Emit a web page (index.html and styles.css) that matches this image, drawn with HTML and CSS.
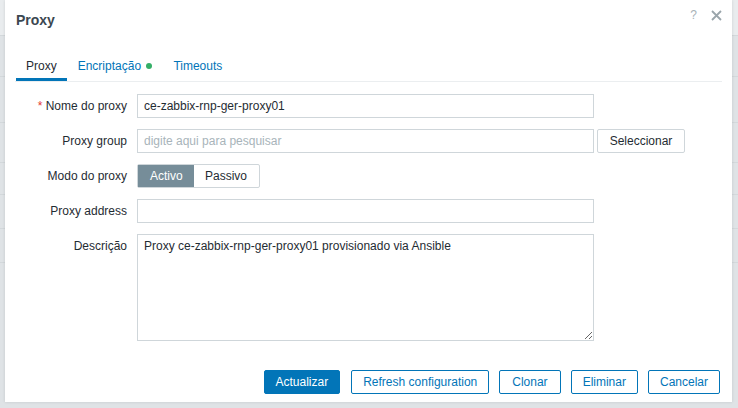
FILE: index.html
```html
<!DOCTYPE html>
<html>
<head>
<meta charset="utf-8">
<link rel="stylesheet" href="styles.css">
</head>
<body>
<div class="page">
  <div class="dialog">
    <div class="dlg-head">
      <h4 class="dlg-title">Proxy</h4>
      <div class="dlg-tools">
        <span class="help">?</span>
        <svg class="close" width="11" height="11" viewBox="0 0 11 11"><path d="M1 1 L10 10 M10 1 L1 10" stroke="#9aa5ab" stroke-width="1.8" fill="none"/></svg>
      </div>
    </div>
    <div class="tabs">
      <span class="tab active">Proxy</span>
      <span class="tab tab-dot">Encriptação <span class="dot"></span></span>
      <span class="tab">Timeouts</span>
    </div>
    <div class="form">
      <label class="lbl"><span class="req">*</span> Nome do proxy</label>
      <div class="ctl"><input class="inp" type="text" value="ce-zabbix-rnp-ger-proxy01"></div>

      <label class="lbl">Proxy group</label>
      <div class="ctl row"><input class="inp" type="text" placeholder="digite aqui para pesquisar"><button class="btn-grey">Seleccionar</button></div>

      <label class="lbl">Modo do proxy</label>
      <div class="ctl"><div class="radio"><span class="seg on">Activo</span><span class="seg">Passivo</span></div></div>

      <label class="lbl">Proxy address</label>
      <div class="ctl"><input class="inp" type="text" value=""></div>

      <label class="lbl">Descrição</label>
      <div class="ctl"><textarea class="txt">Proxy ce-zabbix-rnp-ger-proxy01 provisionado via Ansible</textarea></div>
    </div>
    <div class="footer">
      <button class="btn primary">Actualizar</button>
      <button class="btn alt">Refresh configuration</button>
      <button class="btn alt wide">Clonar</button>
      <button class="btn alt">Eliminar</button>
      <button class="btn alt">Cancelar</button>
    </div>
  </div>
</div>
</body>
</html>
```
FILE: styles.css
```css
html, body {
  margin: 0;
  padding: 0;
}
body {
  width: 738px;
  height: 408px;
  overflow: hidden;
  font-family: "Liberation Sans", Arial, sans-serif;
  font-size: 12px;
  color: #1f2c33;
  background: #dfe3e6;
}
.page {
  width: 738px;
  height: 408px;
  background:
    linear-gradient(#e9ecee, #e9ecee) 0 0 / 100% 35px no-repeat,
    linear-gradient(#d3d8db, #d3d8db) 0 35px / 100% 1px no-repeat,
    linear-gradient(#d3d8db, #d3d8db) 0 76px / 100% 1px no-repeat,
    linear-gradient(#d3d8db, #d3d8db) 0 122px / 100% 1px no-repeat,
    linear-gradient(#d3d8db, #d3d8db) 0 162px / 100% 1px no-repeat,
    linear-gradient(#d3d8db, #d3d8db) 0 194px / 100% 1px no-repeat,
    linear-gradient(#d3d8db, #d3d8db) 0 228px / 100% 1px no-repeat,
    linear-gradient(#d3d8db, #d3d8db) 0 262px / 100% 1px no-repeat,
    #dfe3e6;
}
.dialog {
  margin-left: 5px;
  width: 727px;
  height: 402px;
  background: #fff;
  box-shadow: 0 0 3px rgba(0,0,0,0.12);
  display: flex;
  flex-direction: column;
  box-sizing: border-box;
}
.dlg-head {
  display: flex;
  justify-content: space-between;
  align-items: flex-start;
  height: 52px;
  padding: 0 10px 0 11px;
}
.dlg-title {
  margin: 12px 0 0;
  font-size: 14px;
  font-weight: bold;
  color: #3b4750;
  line-height: 17px;
}
.dlg-tools {
  display: flex;
  align-items: center;
  gap: 14px;
  margin-top: 9px;
}
.help {
  color: #a8b2b8;
  font-size: 12px;
  line-height: 12px;
}
.close { display: block; }
.tabs {
  margin: 0 10px;
  padding-left: 1px;
  display: flex;
  border-bottom: 1px solid #ebeef0;
  height: 30px;
  box-sizing: border-box;
}
.tab {
  padding: 6px 10px 0;
  color: #0275b8;
  line-height: 16px;
  box-sizing: border-box;
}
.tab-dot { padding: 6px 11px 0 11px; }
.tab.active {
  color: #1f2c33;
  border-bottom: 3px solid #0275b8;
}
.dot {
  display: inline-block;
  width: 6px;
  height: 6px;
  border-radius: 50%;
  background: #34af67;
  margin-left: 2px;
  vertical-align: 1px;
}
.form {
  display: grid;
  grid-template-columns: 112px 1fr;
  column-gap: 10px;
  row-gap: 11px;
  padding: 12px 10px 0;
}
.lbl {
  text-align: right;
  line-height: 24px;
  color: #1f2c33;
  white-space: nowrap;
}
.req { color: #e33734; }
.ctl { display: flex; align-items: flex-start; }
.row { gap: 3px; }
.inp {
  width: 457px;
  height: 24px;
  box-sizing: border-box;
  border: 1px solid #cfd6da;
  padding: 0 6px;
  font-family: inherit;
  font-size: 12px;
  color: #1f2c33;
  background: #fff;
  margin: 0;
  outline: none;
}
.inp::placeholder { color: #a8b4ba; }
.btn-grey {
  height: 24px;
  padding: 0 10px;
  box-sizing: border-box;
  border: 1px solid #cfd6da;
  background: #fff;
  border-radius: 2px;
  font-family: inherit;
  font-size: 12px;
  color: #1f2c33;
  width: 88px;
}
.radio {
  display: flex;
  border: 1px solid #cfd6da;
  height: 24px;
  box-sizing: border-box;
  border-radius: 2px;
}
.seg {
  line-height: 22px;
  padding: 0 12px 0 11px;
  color: #1f2c33;
}
.seg.on {
  background: #768d99;
  color: #fff;
  width: 56px;
  box-sizing: border-box;
  padding: 0 12px;
}
.txt {
  width: 457px;
  height: 107px;
  box-sizing: border-box;
  border: 1px solid #cfd6da;
  padding: 4px 6px;
  font-family: inherit;
  font-size: 12px;
  color: #1f2c33;
  resize: both;
  margin: 0;
  outline: none;
}
.footer {
  margin-top: auto;
  display: flex;
  justify-content: flex-end;
  gap: 10px;
  padding: 0 12px 8px;
}
.btn {
  height: 24px;
  box-sizing: border-box;
  padding: 0 11px;
  font-family: inherit;
  font-size: 12px;
  border-radius: 2px;
  margin: 0;
}
.btn.wide { padding: 0 12px; }
.btn.primary {
  background: #0275b8;
  border: 1px solid #0275b8;
  color: #fff;
  margin-right: 1px;
}
.btn.alt {
  background: #fff;
  border: 1px solid #0275b8;
  color: #0275b8;
}
```
